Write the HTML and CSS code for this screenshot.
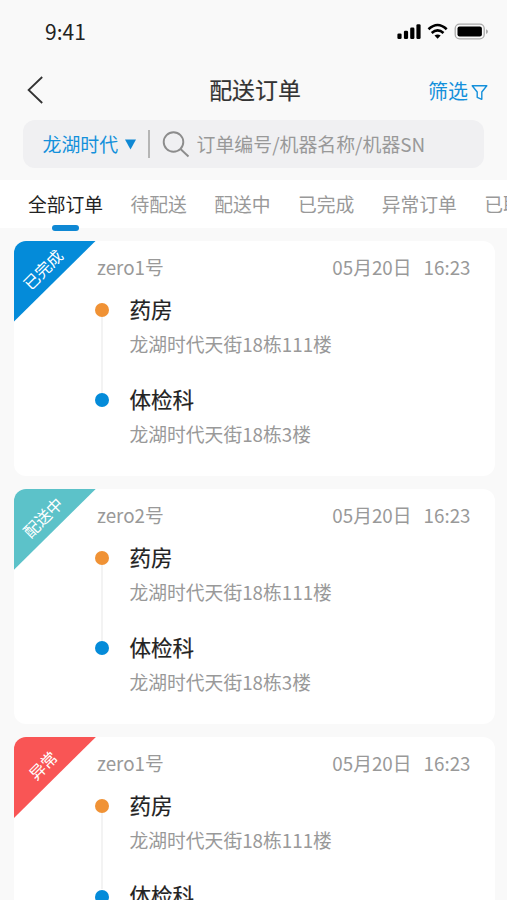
FILE: index.html
```html
<!DOCTYPE html>
<html lang="zh-CN">
<head>
<meta charset="utf-8">
<title>配送订单</title>
<link rel="stylesheet" href="styles.css">
</head>
<body>
<div class="screen">
  <div class="status">
    <span class="clock">9:41</span>
    <svg class="status-icons" width="92" height="18" viewBox="0 0 92 18">
      <g fill="#000">
        <rect x="0.4" y="10.5" width="4.2" height="5.5" rx="1.3"/>
        <rect x="6.9" y="7.8" width="4.2" height="8.2" rx="1.3"/>
        <rect x="13.2" y="4.5" width="4.2" height="11.5" rx="1.3"/>
        <rect x="19.4" y="1.3" width="4.2" height="14.7" rx="1.3"/>
      </g>
      <g fill="none" stroke="#000" stroke-width="2.6">
        <path d="M31.5 6.2Q40.6 -2.2 49.7 6.2"/>
        <path d="M34.7 9.9Q40.6 4.7 46.5 9.9"/>
      </g>
      <path d="M37.5 12.6Q40.6 10.2 43.7 12.6L40.6 15.8Z" fill="#000"/>
      <rect x="58.2" y="1.2" width="29" height="14.6" rx="4.4" fill="none" stroke="#aaa" stroke-width="1.3"/>
      <rect x="60.5" y="3.6" width="24.4" height="9.9" rx="2" fill="#000"/>
      <path d="M89 6.3Q91 7 91 8.6Q91 10.2 89 10.9Z" fill="#aaa"/>
    </svg>
  </div>
  <div class="nav">
    <svg class="back" width="18" height="30" viewBox="0 0 18 30"><path d="M16.2 2L2.6 15L16.2 28" fill="none" stroke="#333" stroke-width="1.8"/></svg>
    <h1 class="title">配送订单</h1>
    <div class="filter">筛选<svg width="17" height="17" viewBox="0 0 17 17"><path d="M1.2 1.7H15.8L10.8 8V15.3L6.2 13.3V8Z" fill="none" stroke="#1490db" stroke-width="1.4" stroke-linejoin="round"/></svg></div>
  </div>
  <div class="search">
    <span class="place">龙湖时代</span>
    <svg class="caret" width="11" height="11" viewBox="0 0 11 11"><path d="M0 0.5H11L5.5 10.5Z" fill="#0f88d4"/></svg>
    <span class="divider"></span>
    <svg class="lens" width="28" height="28" viewBox="0 0 28 28"><g fill="none" stroke="#8c8c8c" stroke-width="1.9"><circle cx="11.5" cy="12" r="9.8"/><path d="M18.5 19L26.5 26.5"/></g></svg>
    <span class="hint">订单编号/机器名称/机器SN</span>
  </div>
  <div class="tabs">
    <span class="tab active">全部订单</span><span class="tab">待配送</span><span class="tab">配送中</span><span class="tab">已完成</span><span class="tab">异常订单</span><span class="tab">已取消</span>
  </div>
  <div class="list">
    <div class="card">
      <div class="corner done"><span>已完成</span></div>
      <div class="head"><span>zero1号</span><span class="time"><span>05月20日</span><span>16:23</span></span></div>
      <div class="stop from"><div class="name">药房</div><div class="addr">龙湖时代天街18栋111楼</div></div>
      <div class="stop to"><div class="name">体检科</div><div class="addr">龙湖时代天街18栋3楼</div></div>
    </div>
    <div class="card">
      <div class="corner moving"><span>配送中</span></div>
      <div class="head"><span>zero2号</span><span class="time"><span>05月20日</span><span>16:23</span></span></div>
      <div class="stop from"><div class="name">药房</div><div class="addr">龙湖时代天街18栋111楼</div></div>
      <div class="stop to"><div class="name">体检科</div><div class="addr">龙湖时代天街18栋3楼</div></div>
    </div>
    <div class="card">
      <div class="corner error"><span>异常</span></div>
      <div class="head"><span>zero1号</span><span class="time"><span>05月20日</span><span>16:23</span></span></div>
      <div class="stop from"><div class="name">药房</div><div class="addr">龙湖时代天街18栋111楼</div></div>
      <div class="stop to"><div class="name">体检科</div><div class="addr">龙湖时代天街18栋3楼</div></div>
    </div>
  </div>
</div>
</body>
</html>
```
FILE: styles.css
```css
* { box-sizing: border-box; }
body { margin: 0; background: #f9f9f9; }
.screen {
  width: 507px;
  height: 900px;
  overflow: hidden;
  background: #f9f9f9;
  color: #333;
  font-family: "Noto Sans CJK SC", sans-serif;
  font-size: 18.8px;
  line-height: 28px;
  white-space: nowrap;
}
.status {
  height: 60px;
  padding: 2px 18px 0 45px;
  display: flex;
  align-items: center;
  justify-content: space-between;
}
.clock { font-size: 21px; color: #222; }
.status-icons { margin-top: 1px; }
.nav {
  height: 60px;
  padding: 0 19px 0 26px;
  display: grid;
  grid-template-columns: 1fr auto 1fr;
  align-items: center;
}
.title {
  margin: 0 4px 2px 0;
  font-size: 22.9px;
  font-weight: 400;
  -webkit-text-stroke: 0.2px currentColor;
}
.filter {
  display: flex;
  align-items: center;
  justify-content: flex-end;
  gap: 3px;
  padding-top: 1px;
  font-size: 20px;
  color: #1490db;
}
.filter svg { margin-top: 3px; }
.search {
  height: 48px;
  width: 461px;
  margin-left: 22.5px;
  padding-left: 20px;
  border-radius: 12px;
  background: #f0f0f2;
  display: flex;
  align-items: center;
}
.place { font-size: 18.9px; color: #1490db; }
.caret { margin-left: 7px; }
.divider { width: 1.5px; height: 28px; margin: 0 12px; background: #b5b5b5; }
.hint { margin-left: 7px; font-size: 18.9px; color: #999; }
.tabs {
  height: 48px;
  margin-top: 12px;
  padding-left: 28px;
  display: flex;
  align-items: center;
  gap: 27.4px;
  background: #fff;
  color: #999;
}
.tab { flex: none; }
.active { position: relative; color: #222; }
.active::after {
  content: "";
  position: absolute;
  left: 24px;
  top: 34.5px;
  width: 27px;
  height: 6px;
  border-radius: 3px;
  background: #0f88d4;
}
.list {
  padding: 12.5px 12.5px 0 14px;
  display: flex;
  flex-direction: column;
  gap: 12.7px;
}
.card {
  position: relative;
  flex: none;
  height: 235.5px;
  padding: 12px 24px 0 83px;
  border-radius: 12px;
  background: #fff;
  overflow: hidden;
}
.corner {
  position: absolute;
  left: 0;
  top: 0;
  width: 82px;
  height: 81px;
  display: flex;
  align-items: center;
  justify-content: center;
  clip-path: polygon(0 0, 100% 0, 0 100%);
  color: #fff;
  font-size: 16px;
}
.corner span { transform: translate(-12.5px, -12px) rotate(-45deg); }
.done { background: #048bd9; }
.moving { background: #5cc2c9; }
.error { background: #f95555; }
.head { display: flex; justify-content: space-between; height: 28px; color: #999; }
.time { display: flex; gap: 12px; }
.stop { position: relative; height: 90.3px; padding: 14px 0 0 32.5px; }
.stop::before {
  content: "";
  position: absolute;
  left: -2px;
  top: 22.5px;
  width: 14px;
  height: 14px;
  border-radius: 50%;
  background: #f09235;
}
.from::after {
  content: "";
  position: absolute;
  left: 4px;
  top: 36.5px;
  width: 2px;
  height: 76px;
  background: #f3f3f3;
}
.to::before { background: #048bd9; }
.name { font-size: 21.5px; color: #222; -webkit-text-stroke: 0.2px currentColor; }
.addr { margin-top: 7px; color: #999; }
```
